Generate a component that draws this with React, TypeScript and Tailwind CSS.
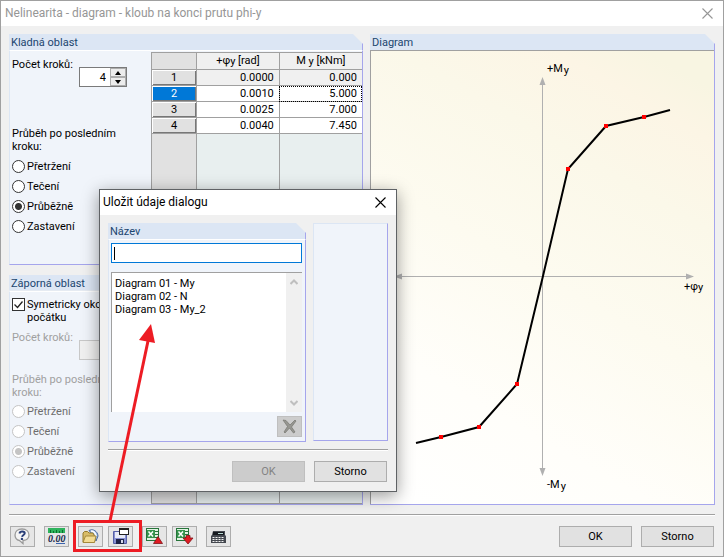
import { useState, type ReactNode } from 'react'
import clsx from 'clsx'

interface Step {
  phi: string
  moment: string
}

interface Tool {
  label: string
  icon: ReactNode
}

const endBehaviours = ['Přetržení', 'Tečení', 'Průběžně', 'Zastavení']

const steps: Step[] = [
  { phi: '0.0000', moment: '0.000' },
  { phi: '0.0010', moment: '5.000' },
  { phi: '0.0025', moment: '7.000' },
  { phi: '0.0040', moment: '7.450' }
]

const savedDiagrams = ['Diagram 01 - My', 'Diagram 02 - N', 'Diagram 03 - My_2']

const curve = [
  [416, 443], [441, 437], [479, 427], [517, 384], [543, 276],
  [568, 169], [606, 126], [644, 117], [670, 110]
]
const markers = [1, 2, 3, 5, 6, 7]

const HelpIcon = () => (
  <svg width="19" height="17" viewBox="0 0 19 17">
    <path d="M9 1C4.800 1 2 3.500 2 7c0 3 2 5 4.500 5.500L10 15.500v-3c3.800-.3 6-2.500 6-5.500 0-3.500-2.800-6-7-6z" fill="#f4f4f4" stroke="#9a9a9a" strokeWidth="1.300" />
    <path d="M6.500 5.500C6.800 4 7.800 3.500 9.200 3.500c1.500 0 2.500.7 2.500 1.800C11.700 7 9.300 7 9.100 8.800" fill="none" stroke="#2a3f78" strokeWidth="2" />
    <circle cx="8.900" cy="10.900" r="1.200" fill="#2a3f78" />
  </svg>
)

const DecimalsIcon = () => (
  <svg width="19" height="17" viewBox="0 0 19 17">
    <rect x="1" y="0" width="17" height="5" fill="#2eb35c" />
    <path d="M3.500 2v3M6.500 3v2M9.500 2v3M12.500 3v2M15.500 2v3" stroke="#08702c" />
    <text x="1" y="14" fontSize="10" fontWeight="bold" fontStyle="italic" fontFamily="Liberation Serif, serif" fill="#16264a">0.00</text>
    <path d="M9 15.500h9" stroke="#3b64b0" />
  </svg>
)

const OpenIcon = () => (
  <svg width="19" height="17" viewBox="0 0 19 17">
    <path d="M8 2.500c4-2 8.500.5 9 5.500l-2 5-3-6z" fill="#a8c4e8" stroke="#47689c" />
    <path d="M10 3c2.500 0 4.500 2 5 5" fill="none" stroke="#fff" strokeWidth="1.500" />
    <path d="M2 14V5l1.500-1.500h3L8 5h4l1.500 3v6z" fill="#d8bc68" stroke="#947a2c" />
    <path d="M2 14.500 4.500 8H15l-1.500 6.500z" fill="#f2dc94" stroke="#a58a3c" />
  </svg>
)

const SaveIcon = () => (
  <svg width="19" height="17" viewBox="0 0 19 17">
    <path d="M2.500 3.500h13v12h-13z" fill="#8790d2" stroke="#5660a6" />
    <rect x="4" y="4" width="10" height="6" fill="#e7eaf6" />
    <rect x="5" y="11" width="8" height="5" fill="#1d2347" />
    <rect x="10" y="12" width="2" height="3" fill="#d5d9eb" />
    <rect x="8.500" y=".5" width="9" height="6" fill="#fff" stroke="#222" />
    <path d="M8 1h10" stroke="#222" strokeWidth="2" />
  </svg>
)

const ExcelIcon = ({ down = false }: { down?: boolean }) => (
  <svg width="19" height="17" viewBox="0 0 19 17">
    <rect x="1.500" y=".5" width="12" height="12" fill="#e3f3e3" stroke="#26743a" />
    <path d="M9 3.500h4M9 6.500h4M9 9.500h4" stroke="#26743a" />
    <rect x="2" y="2" width="8" height="8" fill="#35944c" />
    <path d="m3.500 3.500 4.500 5M8 3.500l-4.500 5" stroke="#fff" strokeWidth="1.500" />
    {down
      ? <path d="M11 7.500h4v2.500h3l-5 6-5-6h3z" fill="#e01b22" stroke="#80141a" strokeWidth=".8" />
      : <path d="m13 8.500 4.500 7h-9z" fill="#e01b22" stroke="#80141a" strokeWidth=".8" />}
  </svg>
)

const CalculatorIcon = () => (
  <svg width="19" height="17" viewBox="0 0 19 17">
    <path d="M4 3h12v4l1 1v7H2V8l1-1z" fill="#454950" />
    <rect x="4" y="4" width="11" height="3" fill="#171a20" />
    <path d="M9 5.500h5" stroke="#b9d9d2" />
    <path d="M3.500 9.500h12M3.500 11.500h12M3.500 13.500h12" stroke="#f3f3f3" strokeDasharray="2 1" />
  </svg>
)

const CloseIcon = () => (
  <svg width="11" height="11" viewBox="0 0 11 11">
    <path d="m.5.5 10 10m0-10-10 10" stroke="currentColor" strokeWidth="1.100" />
  </svg>
)

const toolGroups: Tool[][] = [
  [{ label: 'Nápověda', icon: <HelpIcon /> }],
  [{ label: 'Desetinná místa', icon: <DecimalsIcon /> }],
  [{ label: 'Načíst', icon: <OpenIcon /> }, { label: 'Uložit', icon: <SaveIcon /> }],
  [{ label: 'Export do Excelu', icon: <ExcelIcon /> }, { label: 'Import z Excelu', icon: <ExcelIcon down /> }],
  [{ label: 'Kalkulačka', icon: <CalculatorIcon /> }]
]

const PanelHeader = ({ children }: { children: ReactNode }) => (
  <h2 className="h-4 shrink-0 border-r border-[#a5a5ec] bg-[#dce6f4] pl-[2px] leading-[17px] text-[#1b456f] [clip-path:polygon(0_0,calc(100%_-_10px)_0,100%_10px,100%_100%,0_100%)]">
    {children}
  </h2>
)

const Panel = ({ title, children }: { title: string; children: ReactNode }) => (
  <section className="flex min-h-0 flex-1 flex-col">
    <PanelHeader>{title}</PanelHeader>
    <div className="flex min-h-0 flex-1 border border-t-white border-r-[#a5a5ec] border-b-[#a5a5ec] border-l-[#dce6f4] bg-[#f0f4fa]">
      {children}
    </div>
  </section>
)

const StepCount = ({ id, disabled = false }: { id: string; disabled?: boolean }) => (
  <div className="flex items-start">
    <label htmlFor={id} className={clsx('w-[67px] whitespace-nowrap', disabled && 'text-[#a0a0a0]')}>
      Počet kroků:
    </label>
    <div className={clsx('mt-[9px] flex h-5 w-12 shrink-0 border', disabled ? 'border-[#c8c8c8] bg-[#f0f0f0]' : 'border-[#7a7a7a] bg-white')}>
      <input id={id} disabled={disabled} defaultValue="4" inputMode="numeric" className="w-full min-w-0 pr-1 text-right outline-none" />
      <div className="flex w-4 shrink-0 flex-col bg-[#f0f0f0]">
        {['Zvýšit', 'Snížit'].map((label, i) => (
          <button key={label} aria-label={label} disabled={disabled} className="flex flex-1 items-center justify-center border border-[#adadad] bg-[#ececec]">
            <svg width="6" height="4" viewBox="0 0 6 4">
              <path d={i === 0 ? 'M0 4h6L3 0z' : 'M0 0h6L3 4z'} fill="#000" />
            </svg>
          </button>
        ))}
      </div>
    </div>
  </div>
)

const EndBehaviour = ({ name, disabled = false }: { name: string; disabled?: boolean }) => {
  const [selected, setSelected] = useState('Průběžně')

  return (
    <fieldset disabled={disabled}>
      <legend className={clsx('w-[120px] pb-[3px]', disabled && 'text-[#a0a0a0]')}>Průběh po posledním kroku:</legend>
      {endBehaviours.map((option) => (
        <label key={option} className={clsx('flex h-5 items-center gap-[2px]', disabled && 'text-[#6d6d6d]')}>
          <input
            type="radio"
            name={name}
            checked={selected === option}
            onChange={() => setSelected(option)}
            className="h-[13px] w-[13px] appearance-none rounded-full border border-[#333] bg-white checked:bg-[radial-gradient(circle,#333_3px,white_4px)] disabled:border-[#c4c4c4] disabled:checked:bg-[radial-gradient(circle,#c4c4c4_3px,white_4px)]"
          />
          {option}
        </label>
      ))}
    </fieldset>
  )
}

const StepTable = ({ sign, disabled = false }: { sign: string; disabled?: boolean }) => (
  <div className="w-[211px] shrink-0 pt-px">
    <table className="h-full w-full table-fixed border-collapse bg-[#e8efef] leading-[14px]">
      <thead>
        <tr className="h-[17px] bg-[#f0f0f0]">
          <th className="w-[45px] border border-[#a0a0a0] bg-[#e1e1e1] p-0" />
          <th className="border border-[#a0a0a0] p-0 font-normal">{sign}φ<span className="relative top-px">y</span> [rad]</th>
          <th className="border border-r-0 border-[#a0a0a0] p-0 font-normal">M <span className="relative top-px">y</span> [kNm]</th>
        </tr>
      </thead>
      <tbody>
        {!disabled && steps.map((step, i) => (
          <tr key={step.phi} className={clsx('h-4', i === 0 ? 'bg-[#f0f0f0]' : 'bg-white')}>
            <th className={clsx('border border-[#a0a0a0] p-0 font-normal shadow-[inset_1px_1px_white,inset_-1px_-1px_#777]', i === 1 ? 'bg-[#0078d7] text-white' : 'bg-[#e1e1e1]')}>
              {i + 1}
            </th>
            <td className="border border-[#a0a0a0] py-0 pr-[5px] pl-0 text-right">{step.phi}</td>
            <td className={clsx('border border-r-0 border-[#a0a0a0] py-0 pr-[5px] pl-0 text-right', i === 1 && 'outline-1 -outline-offset-1 outline-black outline-dotted')}>
              {step.moment}
            </td>
          </tr>
        ))}
        <tr>
          <td className="border border-[#a0a0a0] bg-[#e1e1e1]" />
          <td className="border border-[#a0a0a0]" />
          <td className="border border-r-0 border-[#a0a0a0]" />
        </tr>
      </tbody>
    </table>
  </div>
)

const DiagramCanvas = () => (
  <div className="min-h-0 flex-1 border-t border-l border-[#a0a0a0] bg-[linear-gradient(30deg,#ffffff_0%,#fffefa_25%,#fdfbf0_50%,#fbf8e9_72%,#fcf5e5_86%,#f8f5e2_94%)]">
    <svg className="h-full w-full" viewBox="371 51 343 453">
      <g stroke="#b0b0b0">
        <path d="M542.500 82v390M400 276.500h288" />
      </g>
      <g fill="#b0b0b0">
        <path d="m542.500 77 3 8h-6zM542.500 476l3-8h-6zM694 276.500l-8-3v6zM394 276.500l8-3v6z" />
      </g>
      <polyline points={curve.map((p) => p.join(',')).join(' ')} fill="none" stroke="#000" strokeWidth="2" />
      {markers.map((i) => (
        <rect key={i} x={curve[i][0] - 2} y={curve[i][1] - 2} width="4" height="4" fill="#f00" />
      ))}
      <g fontSize="11">
        <text x="547" y="72">+M<tspan dx="1" dy="2">y</tspan></text>
        <text x="684" y="290">+φ<tspan dy="1">y</tspan></text>
        <text x="547" y="488">-M<tspan dx="1" dy="2">y</tspan></text>
      </g>
    </svg>
  </div>
)

const PushButton = ({ children, disabled = false }: { children: ReactNode; disabled?: boolean }) => (
  <button disabled={disabled} className="h-[21px] w-[73px] border border-[#adadad] bg-[#e1e1e1] disabled:border-[#bfbfbf] disabled:bg-[#cccccc] disabled:text-[#838383]">
    {children}
  </button>
)

const SaveDialog = () => (
  <div role="dialog" aria-labelledby="save-title" className="absolute top-[188px] left-[98px] flex h-[303px] w-[298px] flex-col border border-[#5f6265] bg-[#f0f0f0] shadow-[0_4px_16px_rgba(0,0,0,0.4)]">
    <div className="flex h-[25px] shrink-0 items-center justify-between bg-white pr-[10px] pl-[3px]">
      <h2 id="save-title" className="text-[12px]">Uložit údaje dialogu</h2>
      <button aria-label="Zavřít"><CloseIcon /></button>
    </div>
    <div className="flex min-h-0 flex-1 flex-col px-2 pt-2 pb-[9px]">
      <div className="flex h-[218px] gap-[7px]">
        <section className="flex w-[198px] flex-col">
          <PanelHeader><label htmlFor="diagram-name">Název</label></PanelHeader>
          <div className="flex flex-1 flex-col border border-t-white border-r-[#a5a5ec] border-b-[#a5a5ec] border-l-[#dce6f4] bg-[#f0f4fa] pt-[3px] pr-[3px] pb-1 pl-[2px]">
            <div className="flex h-5 items-center border border-[#0078d7] bg-white pl-[2px]">
              <span className="h-[13px] w-px bg-black" />
              <input id="diagram-name" className="min-w-0 flex-1 outline-none" />
            </div>
            <div className="mt-[9px] flex h-[140px] border-t border-l border-[#a0a0a0] bg-white">
              <ul className="flex-1 pt-1 pl-[3px] leading-[13px]">
                {savedDiagrams.map((name) => <li key={name}>{name}</li>)}
              </ul>
              <div className="flex w-4 flex-col items-center justify-between bg-[#f0f0f0] py-[6px]">
                <svg width="8" height="6" viewBox="0 0 8 6"><path d="m.5 5 3.500-3.500L7.500 5" fill="none" stroke="#bfbfbf" strokeWidth="2" /></svg>
                <svg width="8" height="6" viewBox="0 0 8 6"><path d="m.5 1 3.500 3.500L7.500 1" fill="none" stroke="#bfbfbf" strokeWidth="2" /></svg>
              </div>
            </div>
            <button disabled aria-label="Smazat" className="mt-1 flex h-[21px] w-[25px] items-center justify-center self-end border border-[#bfbfbf] bg-[#cccccc]">
              <svg width="15" height="15" viewBox="0 0 15 15">
                <path d="m1 1 3 .5L8 6l5-5 1 1-4.500 6 3.500 5-1.500 1L7.500 9 3 14l-1-1 3.500-5.500z" fill="#969691" stroke="#757570" strokeWidth=".7" />
              </svg>
            </button>
          </div>
        </section>
        <div className="flex-1 border border-t-[#dce6f4] border-r-[#a5a5ec] border-b-[#a5a5ec] border-l-[#dce6f4] bg-[#f0f4fa]" />
      </div>
      <hr className="mt-2 border-t border-b border-t-[#a0a0a0] border-b-white" />
      <div className="mt-auto flex justify-end gap-[9px] pr-px">
        <PushButton disabled>OK</PushButton>
        <PushButton>Storno</PushButton>
      </div>
    </div>
  </div>
)

const Annotation = () => (
  <svg className="pointer-events-none absolute bottom-0 left-0" width="200" height="240" viewBox="1 316 200 240">
    <rect x="74.500" y="521.500" width="66" height="29" fill="none" stroke="#ed1c24" strokeWidth="3" />
    <path d="M110 521 148 341" stroke="#ed1c24" strokeWidth="3" />
    <path d="m151 324 4 19-16-3z" fill="#ed1c24" />
  </svg>
)

export default function App() {
  return (
    <div className="relative flex min-h-screen flex-col border border-[#a0a0a0] bg-[#f0f0f0] font-[Roboto,sans-serif] text-[11px] leading-[13px] text-black">
      <header className="flex h-[25px] shrink-0 items-center justify-between bg-white pr-[10px] pl-1 text-[#969696]">
        <h1 className="text-[12px]">Nelinearita - diagram - kloub na konci prutu phi-y</h1>
        <button aria-label="Zavřít"><CloseIcon /></button>
      </header>

      <main className="flex flex-1 gap-[7px] px-2 pt-2">
        <div className="flex w-[354px] shrink-0 flex-col gap-[10px]">
          <Panel title="Kladná oblast">
            <div className="flex flex-1 flex-col gap-10 pt-[7px] pl-[2px]">
              <StepCount id="positive-steps" />
              <EndBehaviour name="positive-end" />
            </div>
            <StepTable sign="+" />
          </Panel>
          <Panel title="Záporná oblast">
            <div className="flex flex-1 flex-col pt-[6px] pl-[2px]">
              <label className="mb-[7px] flex gap-[2px]">
                <input type="checkbox" defaultChecked className="h-[13px] w-[13px] shrink-0 appearance-none border border-[#333] bg-white" />
                <svg className="pointer-events-none -ml-[15px] shrink-0" width="13" height="13" viewBox="0 0 13 13">
                  <path d="m2.500 6.500 3 3 5-6" fill="none" stroke="#222" strokeWidth="1.300" />
                </svg>
                Symetricky okolo počátku
              </label>
              <StepCount id="negative-steps" disabled />
              <div className="pt-[13px]">
                <EndBehaviour name="negative-end" disabled />
              </div>
            </div>
            <StepTable sign="-" disabled />
          </Panel>
        </div>

        <section className="flex flex-1 flex-col">
          <PanelHeader>Diagram</PanelHeader>
          <div className="flex flex-1 flex-col border-r border-b border-[#a5a5ec]">
            <DiagramCanvas />
          </div>
        </section>
      </main>

      <footer className="px-2 pt-[9px] pb-[9px]">
        <hr className="border-t border-b border-t-[#a0a0a0] border-b-white" />
        <div className="mt-[10px] flex items-center justify-between px-px">
          <div className="flex gap-[9px]">
            {toolGroups.map((group) => (
              <div key={group[0].label} className="flex gap-[5px]">
                {group.map((tool) => (
                  <button key={tool.label} aria-label={tool.label} className="flex h-[21px] w-[25px] items-center justify-center border border-[#adadad] bg-[#e6e6e6]">
                    {tool.icon}
                  </button>
                ))}
              </div>
            ))}
          </div>
          <div className="flex gap-[9px]">
            <PushButton>OK</PushButton>
            <PushButton>Storno</PushButton>
          </div>
        </div>
      </footer>

      <SaveDialog />
      <Annotation />
    </div>
  )
}
